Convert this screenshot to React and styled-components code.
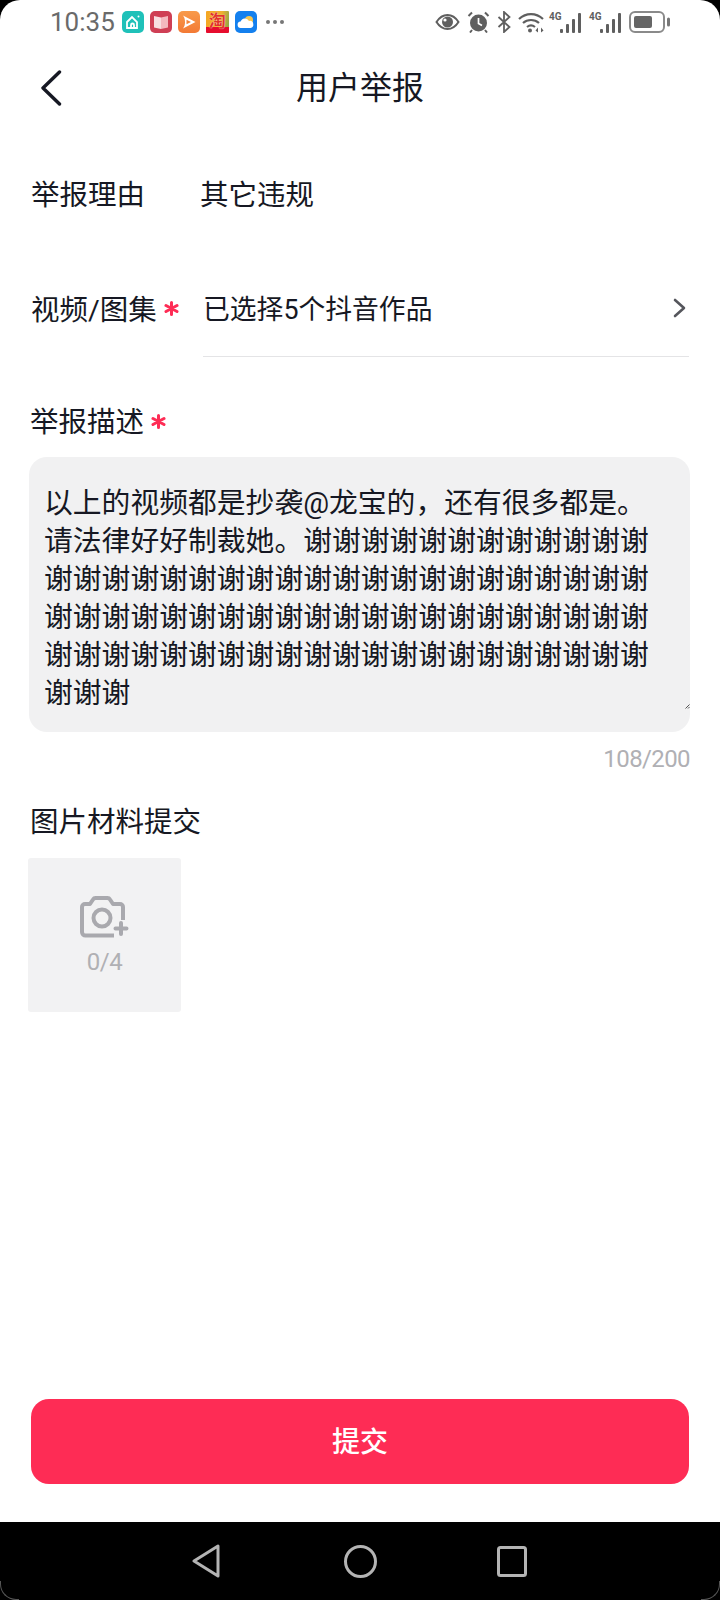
import React from "react";
import styled, { createGlobalStyle } from "styled-components";

const GlobalStyle = createGlobalStyle`
  html, body {
    margin: 0;
    padding: 0;
    background: #000;
  }
  * {
    box-sizing: border-box;
  }
`;

const FONT = `Roboto, "Noto Sans CJK SC", sans-serif`;
const TEXT = "#161823";
const RED = "#fe2c55";

const Phone = styled.div`
  width: 720px;
  height: 1600px;
  display: flex;
  flex-direction: column;
  font-family: ${FONT};
  color: ${TEXT};
  background: #000;
  overflow: hidden;
`;

const Screen = styled.div`
  flex: 1;
  display: flex;
  flex-direction: column;
  background: #fff;
  border-radius: 20px 20px 0 0;
`;

const StatusBar = styled.div`
  height: 46px;
  display: flex;
  align-items: center;
  justify-content: space-between;
  padding: 0 50px 2px 50px;
  color: #5f5f5f;
`;

const StatusGroup = styled.div`
  display: flex;
  align-items: center;
  gap: ${(p) => p.$gap || 6}px;
`;

const Clock = styled.span`
  font-size: 26px;
  line-height: 30px;
  color: #6a6a6a;
  margin-right: 1px;
`;

const AppIcon = styled.div`
  width: 22px;
  height: 22px;
  border-radius: 5px;
  background: ${(p) => p.$bg};
  display: flex;
  align-items: center;
  justify-content: center;
  overflow: hidden;
`;

const TaoIcon = styled(AppIcon)`
  width: 23px;
  border-radius: 1px;
  background: linear-gradient(180deg, transparent 72%, #e60d2e 72%),
    linear-gradient(100deg, #f5a623 0%, #f0b02f 60%, #7fa84a 100%);
  color: #e2342a;
  font-size: 17px;
  font-weight: 700;
  line-height: 20px;
  align-items: flex-start;
  text-shadow: 0 0 1px #fff;
`;

const Dots = styled.div`
  display: flex;
  gap: 3px;
  margin-left: 3px;
`;

const Dot = styled.span`
  width: 4px;
  height: 4px;
  border-radius: 50%;
  background: #777;
`;

const Network = styled.div`
  display: flex;
  align-items: flex-end;
  height: 22px;
`;

const FirstNetwork = styled(Network)`
  margin-left: -3px;
`;

const NetLabel = styled.span`
  width: 11px;
  font-size: 10px;
  font-weight: 700;
  line-height: 10px;
  align-self: flex-start;
  margin-top: 1px;
  white-space: nowrap;
  color: #5f5f5f;
`;

const Header = styled.div`
  height: 84px;
  display: grid;
  grid-template-columns: 1fr auto 1fr;
  align-items: center;
  padding: 0 40px;
`;

const Title = styled.div`
  font-size: 32px;
  line-height: 44px;
  font-weight: 400;
`;

const Form = styled.div`
  flex: 1;
  display: flex;
  flex-direction: column;
  padding: 42px 31px 38px 29px;
`;

const Row = styled.div`
  display: flex;
  align-items: center;
  margin-top: ${(p) => p.$top || 0}px;
  padding-left: 2px;
`;

const Label = styled.div`
  font-size: 28.5px;
  line-height: 40px;
  padding-top: 4px;
  white-space: nowrap;
  display: flex;
  align-items: center;
`;

const RowLabel = styled(Label)`
  width: 172px;
  flex-shrink: 0;
`;

const Star = styled.svg`
  width: 15px;
  height: 15px;
  margin: 0 0 4px 7px;
  color: ${RED};
`;

const Plain = styled.div`
  font-size: 28.5px;
  line-height: 40px;
  padding-top: 4px;
  margin-left: -3px;
`;

const Picker = styled.div`
  flex: 1;
  height: 97px;
  display: flex;
  align-items: center;
  justify-content: space-between;
  padding: 0 3px 1px 0;
  border-bottom: 1px solid #e4e4e6;
  font-size: 26.8px;
`;

const SectionLabel = styled(Label)`
  margin-top: ${(p) => p.$top}px;
  padding-left: 1px;
`;

const DescriptionBox = styled.div`
  position: relative;
  width: 661px;
  height: 275px;
  margin-top: 14px;
  border-radius: 18px;
  background: #f1f1f2;
`;

const Description = styled.textarea`
  display: block;
  width: 100%;
  height: 100%;
  padding: 27px 40px 20px 15px;
  border: 0;
  outline: 0;
  resize: none;
  background: transparent;
  color: ${TEXT};
  font-family: ${FONT};
  font-size: 28.8px;
  line-height: 38px;
  overflow: hidden;
`;

const ResizeMark = styled.svg`
  position: absolute;
  right: 0;
  bottom: 23px;
  width: 5px;
  height: 5px;
`;

const Counter = styled.div`
  width: 661px;
  margin-top: 12px;
  text-align: right;
  font-size: 24px;
  line-height: 30px;
  letter-spacing: -0.6px;
  color: #b0b0b4;
`;

const UploadTile = styled.div`
  width: 153px;
  height: 154px;
  margin: 15px 0 0 -1px;
  border-radius: 3px;
  background: #f2f2f3;
  display: flex;
  flex-direction: column;
  align-items: center;
  padding-top: 38px;
  color: #a9a9ae;
`;

const TileCount = styled.div`
  font-size: 24px;
  line-height: 30px;
  margin-top: 9px;
  letter-spacing: -0.5px;
  color: #b0b0b4;
`;

const SubmitButton = styled.button`
  display: block;
  width: 658px;
  height: 85px;
  margin: auto 0 0 2px;
  padding: 0 0 4px;
  border: 0;
  border-radius: 18px;
  background: ${RED};
  color: #fff;
  font-family: ${FONT};
  font-size: 28px;
  font-weight: 500;
`;

const NavBar = styled.div`
  position: relative;
  height: 78px;
  display: flex;
  align-items: center;
  gap: 120px;
  padding-left: 192px;
  color: #b4b4b4;

  &::before,
  &::after {
    content: "";
    position: absolute;
    bottom: 0;
    width: 18px;
    height: 18px;
    border-bottom: 1px solid #555;
  }

  &::before {
    left: 0;
    border-left: 1px solid #555;
    border-radius: 0 0 0 16px;
  }

  &::after {
    right: 0;
    border-right: 1px solid #555;
    border-radius: 0 0 16px 0;
  }
`;

const NavBackSvg = styled.svg`
  margin-right: 4px;
`;

const StarIcon = () => (
  <Star viewBox="0 0 15 15" fill="none" stroke="currentColor" strokeWidth="3" strokeLinecap="round">
    <path d="M7.5 1.5v12M2 4.5l11 6M13 4.5l-11 6" />
  </Star>
);

const HomeApp = () => (
  <AppIcon $bg="#1fc1b9">
    <svg width="16" height="16" viewBox="0 0 16 16" fill="none" stroke="#fff" strokeWidth="1.8">
      <path d="M2 8l5-5 5 5v6H2z" />
      <path d="M6 14v-3a1.5 1.5 0 0 1 3 0v3" />
      <circle cx="13.5" cy="2.5" r="1" fill="#fff" stroke="none" />
    </svg>
  </AppIcon>
);

const BookApp = () => (
  <AppIcon $bg="#cf3f55">
    <svg width="16" height="16" viewBox="0 0 16 16">
      <path d="M1 2l7 1.5V15l-7-1.5z" fill="#f8dfe2" />
      <path d="M15 2L8 3.5V15l7-1.5z" fill="#f4b9c0" />
    </svg>
  </AppIcon>
);

const VideoApp = () => (
  <AppIcon $bg="linear-gradient(180deg, #f89a4a, #f37a35)">
    <svg width="16" height="16" viewBox="0 0 16 16" fill="none">
      <path d="M2 1.500L14.500 8 2 14.500c1.500-2 2-4 2-6.500S3.500 3.500 2 1.500z" fill="#fff" />
      <path d="M5.500 5.800L10 8l-4.500 2.200z" fill="#f5853c" />
    </svg>
  </AppIcon>
);

const WeatherApp = () => (
  <AppIcon $bg="#1480ee">
    <svg width="20" height="18" viewBox="0 0 20 18">
      <circle cx="13" cy="7" r="4" fill="#f6c650" />
      <path d="M5 15a3.2 3.2 0 0 1-.4-6.4A4.500 4.500 0 0 1 13 8a3.500 3.500 0 0 1 1.500 7z" fill="#fff" />
    </svg>
  </AppIcon>
);

const EyeIcon = () => (
  <svg width="25" height="18" viewBox="0 0 25 18" fill="none">
    <path d="M1.500 9C5 3.500 9 2 12.500 2s7.500 1.500 11 7c-3.500 5.500-7.500 7-11 7s-7.500-1.500-11-7z" stroke="currentColor" strokeWidth="2" />
    <circle cx="12.500" cy="9" r="5.500" fill="currentColor" />
    <circle cx="10" cy="7" r="1.600" fill="#fff" />
  </svg>
);

const AlarmIcon = () => (
  <svg width="23" height="22" viewBox="0 0 23 22" fill="none">
    <circle cx="11.500" cy="12" r="8.500" fill="currentColor" />
    <path d="M11.500 7v5.500l3.500 2" stroke="#fff" strokeWidth="1.700" />
    <path d="M1.500 5L5 1.500M21.500 5L18 1.500M5 19l-2 2.500M18 19l2 2.500" stroke="currentColor" strokeWidth="2" />
  </svg>
);

const BluetoothIcon = () => (
  <svg width="14" height="22" viewBox="0 0 14 22" fill="none" stroke="currentColor" strokeWidth="1.800">
    <path d="M1.500 6l11 10-5.500 5V1l5.500 5-11 10" />
  </svg>
);

const WifiIcon = () => (
  <svg width="27" height="21" viewBox="0 0 27 21" fill="none" stroke="currentColor" strokeWidth="2.200">
    <path d="M1 7c7-6.500 17-6.500 24 0M5 11c4.500-4 11.500-4 16 0M9 15c2.500-2 5.500-2 8 0" />
    <circle cx="12" cy="18.500" r="2" fill="currentColor" stroke="none" />
    <path d="M20 15.500l-2.500 3 2.500 2zM23 15.500l2.500 3-2.500 2z" fill="currentColor" stroke="none" />
  </svg>
);

const SignalBars = () => (
  <svg width="22" height="20" viewBox="0 0 22 20" fill="currentColor">
    <rect x="0" y="16" width="3" height="4" rx="1" />
    <rect x="6" y="11" width="3" height="9" rx="1" />
    <rect x="12" y="6" width="3" height="14" rx="1" />
    <rect x="18" y="0" width="3" height="20" rx="1" />
  </svg>
);

const BatteryIcon = () => (
  <svg width="41" height="22" viewBox="0 0 41 22">
    <rect x="1" y="1" width="34" height="20" rx="5" fill="none" stroke="#8a8a8a" strokeWidth="2" />
    <rect x="5" y="5" width="18" height="12" rx="2" fill="#666" />
    <rect x="38" y="6.500" width="3" height="9" rx="1.500" fill="#777" />
  </svg>
);

const BackIcon = () => (
  <svg width="22" height="36" viewBox="0 0 22 36" fill="none" stroke={TEXT} strokeWidth="3.400" strokeLinecap="round" strokeLinejoin="round">
    <path d="M19.500 2L3 18l16.500 16" />
  </svg>
);

const ChevronIcon = () => (
  <svg width="13" height="20" viewBox="0 0 13 20" fill="none" stroke="#55565c" strokeWidth="2.600" strokeLinecap="round" strokeLinejoin="round">
    <path d="M2 2l9 8-9 8" />
  </svg>
);

const CameraIcon = () => (
  <svg width="49" height="42" viewBox="0 0 49 42" fill="none" stroke="currentColor" strokeWidth="4" strokeLinejoin="round">
    <path d="M43 24V11a3 3 0 0 0-3-3h-7l-3-4.500c-.6-1-1.500-1.500-2.500-1.500h-12c-1 0-1.900.5-2.500 1.500L10 8H5a3 3 0 0 0-3 3v25a3.500 3.500 0 0 0 3.500 3.500H34" />
    <circle cx="22" cy="22" r="8.500" />
    <path d="M41 27v11M35.500 32.500h11" strokeLinecap="round" />
  </svg>
);

const NavBack = () => (
  <NavBackSvg width="28" height="34" viewBox="0 0 28 34" fill="none" stroke="currentColor" strokeWidth="3" strokeLinejoin="round">
    <path d="M26 2v30L2 17z" />
  </NavBackSvg>
);

const NavHome = () => (
  <svg width="33" height="33" viewBox="0 0 33 33" fill="none" stroke="currentColor" strokeWidth="3">
    <circle cx="16.500" cy="16.500" r="15" />
  </svg>
);

const NavRecent = () => (
  <svg width="30" height="31" viewBox="0 0 30 31" fill="none" stroke="currentColor" strokeWidth="3" strokeLinejoin="round">
    <rect x="1.500" y="1.500" width="27" height="28" rx="2" />
  </svg>
);

const DESCRIPTION = `以上的视频都是抄袭@龙宝的，还有很多都是。请法律好好制裁她。${"谢".repeat(78)}`;

const App = () => {
  return (
    <Phone>
      <GlobalStyle />
      <Screen>
        <StatusBar>
          <StatusGroup>
            <Clock>10:35</Clock>
            <HomeApp />
            <BookApp />
            <VideoApp />
            <TaoIcon>淘</TaoIcon>
            <WeatherApp />
            <Dots>
              <Dot />
              <Dot />
              <Dot />
            </Dots>
          </StatusGroup>
          <StatusGroup $gap={7}>
            <EyeIcon />
            <AlarmIcon />
            <BluetoothIcon />
            <WifiIcon />
            <FirstNetwork>
              <NetLabel>4G</NetLabel>
              <SignalBars />
            </FirstNetwork>
            <Network>
              <NetLabel>4G</NetLabel>
              <SignalBars />
            </Network>
            <BatteryIcon />
          </StatusGroup>
        </StatusBar>

        <Header>
          <BackIcon />
          <Title>用户举报</Title>
        </Header>

        <Form>
          <Row>
            <RowLabel>举报理由</RowLabel>
            <Plain>其它违规</Plain>
          </Row>
          <Row $top={44}>
            <RowLabel>
              视频/图集
              <StarIcon />
            </RowLabel>
            <Picker>
              已选择5个抖音作品
              <ChevronIcon />
            </Picker>
          </Row>
          <SectionLabel $top={42}>
            举报描述
            <StarIcon />
          </SectionLabel>
          <DescriptionBox>
            <Description readOnly value={DESCRIPTION} />
            <ResizeMark viewBox="0 0 5 5" fill="none" stroke="#555" strokeWidth="1">
              <path d="M0.500 4.500l4-4M3 4.500l1.500-1.500" />
            </ResizeMark>
          </DescriptionBox>
          <Counter>108/200</Counter>
          <SectionLabel $top={25}>图片材料提交</SectionLabel>
          <UploadTile>
            <CameraIcon />
            <TileCount>0/4</TileCount>
          </UploadTile>
          <SubmitButton>提交</SubmitButton>
        </Form>
      </Screen>
      <NavBar>
        <NavBack />
        <NavHome />
        <NavRecent />
      </NavBar>
    </Phone>
  );
};

export default App;
